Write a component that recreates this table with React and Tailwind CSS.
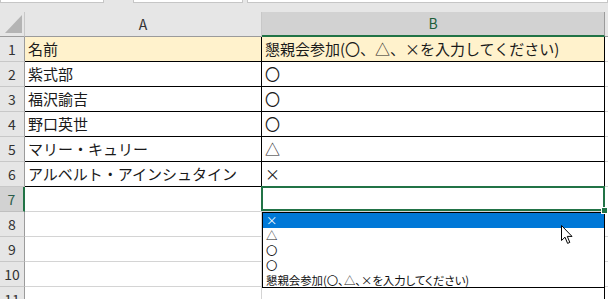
import React from "react";

const data = [
  ["名前", "懇親会参加(〇、△、×を入力してください)"],
  ["紫式部", "〇"],
  ["福沢諭吉", "〇"],
  ["野口英世", "〇"],
  ["マリー・キュリー", "△"],
  ["アルベルト・アインシュタイン", "×"],
];

const options = ["×", "△", "〇", "〇", "懇親会参加(〇、△、×を入力してください)"];

function RowHead({ n, active }) {
  return (
    <div
      className={
        active
          ? "h-[25px] flex items-center justify-center border-b border-b-[#bfbfbf] border-r-2 border-r-[#217346] bg-[#d2d2d2] text-[14px] text-[#2b5c4a]"
          : "h-[25px] flex items-center justify-center border-b border-b-[#c8c8c8] border-r border-r-[#9b9b9b] bg-[#e6e6e6] text-[14px] text-[#333]"
      }
    >
      {n}
    </div>
  );
}

function Dropdown() {
  return (
    <div className="absolute left-0 top-[25px] w-[343px] h-[76px] border border-black bg-white z-10 text-[11.4px] [font-feature-settings:'palt'] text-[#111]">
      {options.map((o, i) => (
        <div
          key={i}
          className={
            i === 0
              ? "h-[15px] leading-[14px] pl-[3px] whitespace-nowrap bg-[#0078d7] text-white"
              : "h-[15px] leading-[14px] pl-[3px] whitespace-nowrap"
          }
        >
          {o}
        </div>
      ))}
    </div>
  );
}

export default function App() {
  return (
    <div className="relative w-[608px] h-[299px] overflow-hidden bg-white font-['Noto_Sans_CJK_JP','Noto_Sans_CJK_SC',sans-serif] text-[#1a1a1a]">
      {/* toolbar strip above the column headers */}
      <div className="h-[12px] bg-[#e6e6e6] flex items-start">
        <div className="w-[104px] h-[3px] bg-white border-x border-b border-[#c6c6c6]" />
        <div className="ml-[29px] w-[110px] h-[3px] bg-white border-x border-b border-[#c6c6c6]" />
        <div className="ml-[4px] flex-1 h-[3px] bg-white border-x border-b border-[#c6c6c6]" />
      </div>

      <div className="grid grid-cols-[25px_237px_343px_1fr]">
        {/* column headers */}
        <div className="relative h-[25px] bg-[#e6e6e6] border-r border-b border-r-[#c8c8c8] border-b-[#9b9b9b]">
          <svg className="absolute left-[5px] top-[3px]" width="17" height="18" viewBox="0 0 17 18">
            <polygon points="17,0 17,18 0,18" fill="#b4b4b4" />
          </svg>
        </div>
        <div className="h-[25px] flex items-center justify-center bg-[#e6e6e6] border-r border-b border-r-[#c8c8c8] border-b-[#9b9b9b] text-[14px] text-[#333]">
          A
        </div>
        <div className="h-[25px] flex items-center justify-center bg-[#d2d2d2] border-r border-r-[#9b9b9b] border-b-2 border-b-[#217346] text-[14px] text-[#1d5f3a]">
          B
        </div>
        <div className="h-[25px] bg-[#e6e6e6] border-b border-b-[#9b9b9b]" />

        {/* bordered table rows */}
        {data.map((row, i) => (
          <React.Fragment key={i}>
            <RowHead n={i + 1} />
            <div
              className={
                (i === 0 ? "bg-[#fff2cc] " : "bg-white ") +
                "h-[25px] flex items-center pl-[3px] border-r border-b border-black text-[15px] whitespace-nowrap"
              }
            >
              {row[0]}
            </div>
            <div
              className={
                (i === 0 ? "bg-[#fff2cc] " : "bg-white ") +
                "h-[25px] flex items-center pl-[3px] border-r border-b border-black text-[15px] whitespace-nowrap"
              }
            >
              {row[1]}
            </div>
            <div className="h-[25px] border-b border-[#d4d4d4]" />
          </React.Fragment>
        ))}

        {/* row 7 with the active cell and its list */}
        <RowHead n={7} active />
        <div className="h-[25px] border-r border-b border-[#d4d4d4]" />
        <div className="relative h-[25px] border-r border-b border-[#d4d4d4]">
          <div className="absolute -left-[1px] -top-[1px] -right-[1px] bottom-0 border-2 border-[#217346]" />
          <Dropdown />
          <div className="absolute -right-[3px] -bottom-[2px] w-[5px] h-[5px] bg-[#217346] outline outline-1 outline-white z-20" />
        </div>
        <div className="h-[25px] border-b border-[#d4d4d4]" />

        {/* empty rows */}
        {[8, 9, 10, 11].map((n) => (
          <React.Fragment key={n}>
            <RowHead n={n} />
            <div className="h-[25px] border-r border-b border-[#d4d4d4]" />
            <div className="h-[25px] border-r border-b border-r-black border-b-[#d4d4d4]" />
            <div className="h-[25px] border-b border-[#d4d4d4]" />
          </React.Fragment>
        ))}
      </div>

      {/* mouse pointer */}
      <svg className="absolute left-[561px] top-[225px] z-30" width="13" height="20" viewBox="0 0 13 20">
        <path
          d="M0.5 0.5 L0.5 15.5 L4 12.2 L6.6 18.4 L8.8 17.4 L6.3 11.4 L11 11.4 Z"
          fill="white"
          stroke="black"
          strokeWidth="1"
          strokeLinejoin="round"
        />
      </svg>
    </div>
  );
}
